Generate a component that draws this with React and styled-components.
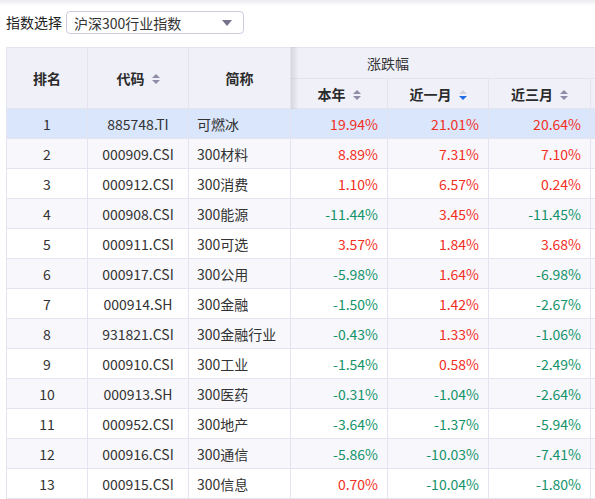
import React from "react";
import styled, { createGlobalStyle } from "styled-components";

const GlobalStyle = createGlobalStyle`
  html, body {
    margin: 0;
    padding: 0;
    background: #ffffff;
  }
  body {
    font-family: "Noto Sans CJK SC", "Noto Sans", sans-serif;
    font-size: 14px;
    color: #333333;
    overflow: hidden;
  }
`;

const rows = [
  ["885748.TI", "可燃冰", 19.94, 21.01, 20.64],
  ["000909.CSI", "300材料", 8.89, 7.31, 7.1],
  ["000912.CSI", "300消费", 1.1, 6.57, 0.24],
  ["000908.CSI", "300能源", -11.44, 3.45, -11.45],
  ["000911.CSI", "300可选", 3.57, 1.84, 3.68],
  ["000917.CSI", "300公用", -5.98, 1.64, -6.98],
  ["000914.SH", "300金融", -1.5, 1.42, -2.67],
  ["931821.CSI", "300金融行业", -0.43, 1.33, -1.06],
  ["000910.CSI", "300工业", -1.54, 0.58, -2.49],
  ["000913.SH", "300医药", -0.31, -1.04, -2.64],
  ["000952.CSI", "300地产", -3.64, -1.37, -5.94],
  ["000916.CSI", "300通信", -5.86, -10.03, -7.41],
  ["000915.CSI", "300信息", 0.7, -10.04, -1.8],
];

const cols = [81, 101, 102, 97, 101, 102, 100];

const Page = styled.div`
  width: 100vw;
  height: 100vh;
  overflow: hidden;
  position: relative;
`;

const TopShade = styled.div`
  height: 6px;
  background: linear-gradient(#ececf0, rgba(255, 255, 255, 0));
`;

const Toolbar = styled.div`
  display: flex;
  align-items: center;
  gap: 4px;
  padding: 5px 6px 0;
  margin-bottom: 13px;
`;

const Label = styled.span`
  font-size: 14px;
  color: #222;
  line-height: 23px;
`;

const Select = styled.div`
  box-sizing: border-box;
  width: 178px;
  height: 23px;
  border: 1px solid #cdcbe0;
  border-radius: 4px;
  display: flex;
  align-items: center;
  justify-content: space-between;
  padding: 0 11px 0 7px;
  font-size: 14px;
  color: #333;
`;

const Caret = styled.span`
  width: 0;
  height: 0;
  border-left: 5px solid transparent;
  border-right: 5px solid transparent;
  border-top: 6px solid #75738c;
`;

const TableWrap = styled.div`
  padding-left: 6px;
`;

const Table = styled.table`
  border-collapse: collapse;
  table-layout: fixed;
  width: ${cols.reduce((a, b) => a + b, 0)}px;
`;

const HeadRow = styled.tr`
  height: ${({ $h }) => $h}px;
`;

const Th = styled.th`
  padding: 0;
  background: #f0f0f9;
  border: 1px solid #e4e3ef;
  font-weight: 700;
  font-size: 14px;
  color: #2b2b2b;
  text-align: ${({ $align }) => $align || "center"};
  padding-left: ${({ $pl }) => $pl || 0}px;
  position: relative;
  white-space: nowrap;
`;

const GroupTitle = styled.span`
  font-weight: 400;
  color: #333;
`;

const Td = styled.td`
  height: 29px;
  padding: 0 ${({ $align }) => ($align === "right" ? 9 : 0)}px 0
    ${({ $align }) => ($align === "left" ? 8 : 0)}px;
  border: 1px solid #e4e3ef;
  text-align: ${({ $align }) => $align || "center"};
  color: ${({ $color }) => $color || "#333"};
  position: relative;
  white-space: nowrap;
  overflow: hidden;
`;

const Tr = styled.tr`
  background: ${({ $selected, $even }) =>
    $selected ? "#d9e6fc" : $even ? "#f8f8fc" : "#ffffff"};
`;

const FixedEdge = styled.span`
  position: absolute;
  top: -1px;
  bottom: -1px;
  right: -9px;
  width: 8px;
  background: linear-gradient(to right, rgba(0, 0, 0, 0.1), rgba(0, 0, 0, 0));
  pointer-events: none;
  z-index: 1;
`;

const SortBox = styled.span`
  display: inline-flex;
  flex-direction: column;
  gap: 2px;
  margin-left: 7px;
  vertical-align: middle;
  position: relative;
  top: -1px;
`;

const Tri = styled.span`
  width: 0;
  height: 0;
  border-left: 4px solid transparent;
  border-right: 4px solid transparent;
  ${({ $dir, $color }) =>
    $dir === "up"
      ? `border-bottom: 4px solid ${$color};`
      : `border-top: 4px solid ${$color};`}
`;

const SortIcon = ({ active }) => (
  <SortBox>
    <Tri $dir="up" $color={active === "desc" ? "#d3d2df" : "#8e8ca6"} />
    <Tri $dir="down" $color={active === "desc" ? "#1e6be6" : "#8e8ca6"} />
  </SortBox>
);

const pct = (v) => (
  <Td $align="right" $color={v >= 0 ? "#f2301f" : "#14936b"}>
    {v.toFixed(2)}%
  </Td>
);

export default function App() {
  return (
    <Page>
      <GlobalStyle />
      <TopShade />
      <Toolbar>
        <Label>指数选择</Label>
        <Select>
          <span>沪深300行业指数</span>
          <Caret />
        </Select>
      </Toolbar>
      <TableWrap>
        <Table>
          <colgroup>
            {cols.map((w, i) => (
              <col key={i} style={{ width: w }} />
            ))}
          </colgroup>
          <thead>
            <HeadRow $h={31}>
              <Th rowSpan={2}>排名</Th>
              <Th rowSpan={2}>
                代码
                <SortIcon />
              </Th>
              <Th rowSpan={2}>
                简称
                <FixedEdge />
              </Th>
              <Th colSpan={4} $align="left" $pl={76}>
                <GroupTitle>涨跌幅</GroupTitle>
              </Th>
            </HeadRow>
            <HeadRow $h={30}>
              <Th>
                本年
                <SortIcon />
              </Th>
              <Th>
                近一月
                <SortIcon active="desc" />
              </Th>
              <Th>
                近三月
                <SortIcon />
              </Th>
              <Th />
            </HeadRow>
          </thead>
          <tbody>
            {rows.map(([code, name, y, m1, m3], i) => (
              <Tr key={code} $selected={i === 0} $even={i % 2 === 1}>
                <Td>{i + 1}</Td>
                <Td>{code}</Td>
                <Td $align="left">
                  {name}
                  <FixedEdge />
                </Td>
                {pct(y)}
                {pct(m1)}
                {pct(m3)}
                <Td />
              </Tr>
            ))}
          </tbody>
        </Table>
      </TableWrap>
    </Page>
  );
}
